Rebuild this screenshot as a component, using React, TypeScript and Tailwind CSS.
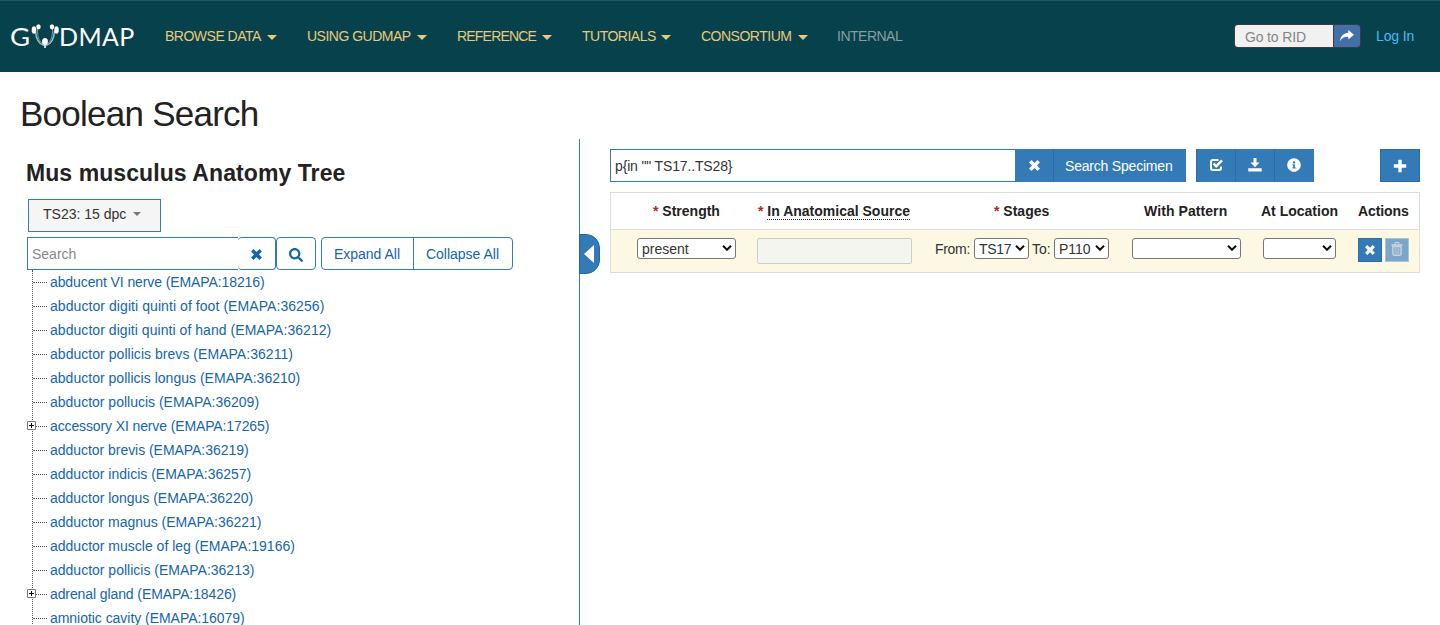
import React from "react";
import { FaSearch, FaInfoCircle, FaPlus } from "react-icons/fa";

const nav: [string, string][] = [
  ["BROWSE DATA", "w-[112px]"],
  ["USING GUDMAP", "w-[120px]"],
  ["REFERENCE", "w-[95px] tracking-[-0.8px]"],
  ["TUTORIALS", "w-[89px]"],
  ["CONSORTIUM", "w-[107px]"],
];

const tree: [string, boolean, string][] = [
  ["abducent VI nerve (EMAPA:18216)", false, "tracking-[-0.1px]"],
  ["abductor digiti quinti of foot (EMAPA:36256)", false, "tracking-[0.07px]"],
  ["abductor digiti quinti of hand (EMAPA:36212)", false, "tracking-[0.05px]"],
  ["abductor pollicis brevs (EMAPA:36211)", false, "tracking-[0.04px]"],
  ["abductor pollicis longus (EMAPA:36210)", false, "tracking-[0.02px]"],
  ["abductor pollucis (EMAPA:36209)", false, ""],
  ["accessory XI nerve (EMAPA:17265)", true, "tracking-[-0.12px]"],
  ["adductor brevis (EMAPA:36219)", false, "tracking-[-0.04px]"],
  ["adductor indicis (EMAPA:36257)", false, ""],
  ["adductor longus (EMAPA:36220)", false, "tracking-[-0.02px]"],
  ["adductor magnus (EMAPA:36221)", false, "tracking-[-0.03px]"],
  ["adductor muscle of leg (EMAPA:19166)", false, ""],
  ["adductor pollicis (EMAPA:36213)", false, ""],
  ["adrenal gland (EMAPA:18426)", true, "tracking-[-0.1px]"],
  ["amniotic cavity (EMAPA:16079)", false, "tracking-[-0.04px]"],
];

function Caret({ className }: { className: string }) {
  return (
    <svg viewBox="0 0 10 5" className={className} fill="currentColor">
      <path d="M0 0h10L5 5z" />
    </svg>
  );
}

function Cross({ className }: { className: string }) {
  return (
    <svg viewBox="0 0 12 12" className={className} stroke="currentColor" strokeWidth="3.8" fill="none">
      <path d="M1.4 1.4l9.200 9.200M10.600 1.400L1.400 10.600" />
    </svg>
  );
}

function Select({ text, className }: { text: string; className: string }) {
  return (
    <div className={`flex h-[21px] items-center justify-between rounded-[3px] border border-[#767676] bg-white pl-1 pr-[3px] text-sm text-[#333] ${className}`}>
      <span className="whitespace-nowrap pt-px">{text}</span>
      <svg viewBox="0 0 10 6" className="-mt-px h-[6px] w-[10px] shrink-0" fill="none" stroke="#111" strokeWidth="2">
        <path d="M1 .8l4 4 4-4" />
      </svg>
    </div>
  );
}

function Header() {
  return (
    <header className="flex h-[72px] items-center border-t border-[#1c5560] bg-[#07414c] pb-[2px] pl-[10px] pr-[26px] text-sm">
      <div className="flex h-[30px] w-[155px] items-center whitespace-nowrap pt-px font-['Lato'] text-[25px] font-normal leading-none text-white">
        <span className="w-[20px] shrink-0 origin-left scale-x-[1.1]">G</span>
        <svg viewBox="0 0 30 26" className="h-[26px] w-[30px] shrink-0" fill="none" stroke="#fff">
          <path d="M5.500 8c.5 9 3 13 8.500 14.500M24.500 8c-.5 9-3 13-8.500 14.500" stroke="#9db8bd" strokeWidth="1.500" />
          <path d="M7.500 6c0 8 1 11.500 5.500 15M22.500 6c0 8-1 11.500-5.500 15" stroke="#7b9ca3" strokeWidth="1" />
          <ellipse cx="4" cy="7" rx="2.300" ry="3.800" fill="#fff" stroke="none" />
          <ellipse cx="26.500" cy="7" rx="2.300" ry="3.800" fill="#fff" stroke="none" />
          <ellipse cx="8.500" cy="3.800" rx="2.200" ry="2.600" fill="#fff" stroke="none" />
          <ellipse cx="22" cy="3.800" rx="2.200" ry="2.600" fill="#fff" stroke="none" />
          <ellipse cx="15" cy="18.500" rx="2.900" ry="3.500" fill="#fff" stroke="none" />
          <path d="M15 20v5" strokeWidth="1.600" />
        </svg>
        <span className="-ml-px tracking-[0.4px]">DMAP</span>
      </div>
      <nav className="flex items-center text-[#eac97b]">
        {nav.map(([label, w]) => (
          <a key={label} className={`mr-[30px] flex items-center justify-between whitespace-nowrap tracking-[-0.5px] ${w}`}>
            {label}
            <Caret className="mt-[3px] h-[5px] w-[10px]" />
          </a>
        ))}
        <a className="-ml-px tracking-[-0.5px] text-[#8a9da3]">INTERNAL</a>
      </nav>
      <div className="ml-auto flex items-center">
        <div className="mt-px flex h-6 w-[127px] overflow-hidden rounded-[4px] border border-[#3c3c42]">
          <div className="flex flex-1 items-center bg-[#f1f1f1] pl-[10px] pt-px tracking-[-0.15px] text-[#858585]">Go to RID</div>
          <div className="flex w-[27px] items-center justify-center border-l border-[#3c3c42] bg-[#4370a9] pb-px text-white">
            <svg viewBox="0 0 14 12" className="h-[12px] w-[14px]" fill="currentColor">
              <path d="M8.300 0L14 4.800 8.300 9.600V6.800C4.500 6.600 2 7.600 0 11.200 .5 6.300 3.500 3.200 8.300 2.800z" />
            </svg>
          </div>
        </div>
        <a className="ml-[15px] w-[38px] whitespace-nowrap tracking-[-0.15px] text-[#4cb8f5]">Log In</a>
      </div>
    </header>
  );
}

function TreePanel() {
  return (
    <section className="w-[579px] shrink-0 pl-[26px]">
      <h2 className="whitespace-nowrap pt-[18px] text-[23px] font-bold leading-[32px] tracking-[0.08px] text-[#222]">
        Mus musculus Anatomy Tree
      </h2>
      <button className="ml-[2px] mt-[10px] flex h-[33px] w-[133px] items-center border border-[#337ab7] bg-[#f5f5f5] pb-[3px] pl-[14px] text-sm text-[#333]">
        <span className="whitespace-nowrap">TS23: 15 dpc</span>
        <Caret className="ml-[7px] h-[4px] w-[8px] text-[#777]" />
      </button>
      <div className="ml-px mt-[5px] flex h-[33px] text-sm text-[#1565ab]">
        <div className="flex w-[211px] items-center border border-r-0 border-[#337ab7] pl-1 text-[#888]">Search</div>
        <div className="flex w-[38px] items-center justify-center rounded-[4px] border border-l-0 border-[#337ab7] pr-px pt-[2px]">
          <Cross className="size-[11px]" />
        </div>
        <div className="flex w-[40px] items-center justify-center rounded-[4px] border border-[#337ab7] pt-[2px]">
          <FaSearch className="size-[14px]" />
        </div>
        <div className="ml-[5px] flex w-[192px] rounded-[4px] border border-[#337ab7]">
          <div className="flex w-[92px] items-center justify-center border-r border-[#337ab7] pr-px">Expand All</div>
          <div className="flex flex-1 items-center justify-center whitespace-nowrap pr-px">Collapse All</div>
        </div>
      </div>
      <ul className="ml-[6px] border-l border-dotted border-[#555] text-sm text-[#1565ab]">
        {tree.map(([label, open, t]) => (
          <li key={label} className="relative flex h-6 items-center">
            {open && (
              <svg viewBox="0 0 9 9" className="absolute -left-[6px] top-[7px] size-[9px]">
                <path d="M.5.5h8v8h-8z" fill="#fff" stroke="#777" />
                <path d="M2 4.500h5M4.500 2v5" stroke="#000" />
              </svg>
            )}
            <span className={`mr-[3px] border-t border-dotted border-[#555] ${open ? "ml-[3px] w-[11px]" : "w-[14px]"}`} />
            <span className={`whitespace-nowrap ${t}`}>{label}</span>
          </li>
        ))}
      </ul>
    </section>
  );
}

const star = <span className="text-[#a92a2a]">* </span>;

function QueryPanel() {
  const iconCell = "flex w-[39px] items-center justify-center border-l border-[#2e6da4] pr-px pb-px";
  return (
    <section className="min-w-0 flex-1 pl-[30px] pr-5 pt-[10px] text-sm">
      <div className="flex h-[33px]">
        <div className="flex w-[405px] items-center border border-r-0 border-[#337ab7] pl-1 tracking-[-0.15px] text-[#333]">{'p{in "" TS17..TS28}'}</div>
        <div className="flex w-[171px] bg-[#337ab7] text-white">
          <div className="flex w-[38px] items-center justify-center pb-px"><Cross className="size-[11px]" /></div>
          <div className="flex flex-1 items-center whitespace-nowrap border-l border-[#2e6da4] pl-[11px] tracking-[-0.2px]">Search Specimen</div>
        </div>
        <div className="ml-[10px] flex w-[118px] bg-[#337ab7] text-white">
          <div className={iconCell}>
            <svg viewBox="0 0 14 14" className="size-[14px]" fill="none" stroke="currentColor" strokeWidth="2">
              <path d="M9.500 2H4a2 2 0 0 0-2 2v6a2 2 0 0 0 2 2h6a2 2 0 0 0 2-2V8.500" />
              <path d="M4.500 5.500l2.700 2.700L13 2.400" strokeWidth="2.400" />
            </svg>
          </div>
          <div className={iconCell}>
            <svg viewBox="0 0 14 14" className="size-[14px]" fill="currentColor">
              <path d="M5.500 0h3v4.500h3L7 9.200 2.500 4.500h3zM.3 10.300h13.400v3.200H.3z" />
            </svg>
          </div>
          <div className={iconCell}><FaInfoCircle className="size-[14px]" /></div>
        </div>
        <div className="ml-auto flex w-10 items-center justify-center border border-[#2e6da4] bg-[#337ab7] pr-px text-white">
          <svg viewBox="0 0 14 14" className="size-[14px]" stroke="currentColor" strokeWidth="3.400">
            <path d="M.8 7h12.400M7 .8v12.400" />
          </svg>
        </div>
      </div>
      <div className="mt-[10px] h-[81px] border border-[#ddd]">
        <div className="flex h-[37px] items-center whitespace-nowrap border-b border-[#ddd] font-bold text-[#222]">
          <span className="ml-[42px] w-[105px]">{star}Strength</span>
          <span className="w-[236px]">{star}<span className="border-b border-dotted border-[#333]">In Anatomical Source</span></span>
          <span className="w-[150px]">{star}Stages</span>
          <span className="w-[117px] tracking-[0.08px]">With Pattern</span>
          <span className="w-[97px]">At Location</span>
          <span className="tracking-[-0.1px]">Actions</span>
        </div>
        <div className="flex h-[42px] items-start bg-[#fcf8e3] pt-2">
          <Select text="present" className="ml-[26px] w-[99px]" />
          <div className="ml-[21px] h-[26px] w-[155px] rounded-[2px] border border-[#ccc] bg-[#f5f5f0]" />
          <span className="ml-[23px] w-[39px] pt-px tracking-[-0.3px] text-[#333]">From:</span>
          <Select text="TS17" className="w-[55px] tracking-[-0.3px]" />
          <span className="ml-[3px] w-[22px] pt-px text-[#333]">To:</span>
          <Select text="P110" className="w-[55px]" />
          <Select text="" className="ml-[23px] w-[109px]" />
          <Select text="" className="ml-[22px] w-[73px]" />
          <div className="ml-[22px] flex size-6 items-center justify-center border border-[#2e6da4] bg-[#337ab7] pb-px pr-px text-white">
            <Cross className="size-[10px]" />
          </div>
          <div className="ml-[3px] flex size-6 items-center justify-center border border-[#a9c4d6] bg-[#7ba5c9] pb-[2px] text-[#c9d6dc]">
            <svg viewBox="0 0 12 14" className="h-[14px] w-[12px]" fill="none" stroke="currentColor">
              <path d="M4 2.500v-2h4v2" />
              <path d="M.5 3h11" strokeWidth="1.600" />
              <path d="M1.900 4.500h8.200v7.500a1.200 1.200 0 0 1-1.200 1.200H3.100a1.200 1.200 0 0 1-1.200-1.200z" strokeWidth="1.400" />
              <path d="M4.200 5.500v6.500M6 5.500v6.500M7.800 5.500v6.500" strokeWidth=".8" />
            </svg>
          </div>
        </div>
      </div>
    </section>
  );
}

export default function App() {
  return (
    <div className="h-[625px] overflow-hidden bg-white font-['Liberation_Sans',Arial,sans-serif]">
      <Header />
      <h1 className="h-[67px] pl-5 pt-[22px] text-[35px] leading-[40px] tracking-[-0.75px] text-[#222]">Boolean Search</h1>
      <main className="flex h-[486px]">
        <TreePanel />
        <div className="relative w-px bg-[#337ab7]">
          <div className="absolute left-0 top-[95px] flex h-10 w-[21px] items-center justify-center rounded-r-[14px] border border-[#2065a5] bg-[#337ab7] pr-[2px]">
            <svg viewBox="0 0 10 18" className="h-[18px] w-[10px]" fill="#fff"><path d="M10 0v18L0 9z" /></svg>
          </div>
        </div>
        <QueryPanel />
      </main>
    </div>
  );
}
